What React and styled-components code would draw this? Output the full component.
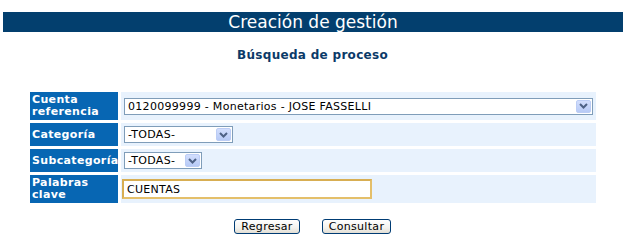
import React, { useState } from 'react';
import styled, { createGlobalStyle } from 'styled-components';

const GlobalStyle = createGlobalStyle`
    body {
        margin: 0;
        background: #ffffff;
        font-family: "DejaVu Sans", Verdana, sans-serif;
    }
`;

// 페이지 전체
const Page = styled.div`
    width: 625px;
    padding-top: 12px;
    box-sizing: border-box;
`;

// 상단 제목 바
const TitleBar = styled.div`
    margin: 0 2px 0 3px;
    height: 20px;
    background: #033f6e;
    color: #ffffff;
    font-size: 17px;
    line-height: 20px;
    text-align: center;
`;

// 부제목
const Subtitle = styled.div`
    margin-top: 16px;
    color: #0b3a68;
    font-size: 12px;
    font-weight: bold;
    line-height: 14px;
    letter-spacing: 0.3px;
    text-align: center;
`;

// 폼 그리드
const FormGrid = styled.div`
    display: grid;
    grid-template-columns: 88px 475px;
    grid-auto-rows: auto;
    gap: 3px;
    margin: 30px 0 0 30px;
`;

// 라벨 셀
const LabelCell = styled.div`
    height: ${(p) => p.$h}px;
    display: flex;
    align-items: center;
    padding: 0 1px 0 2px;
    box-sizing: border-box;
    background: #0766b3;
    color: #ffffff;
    font-size: 11px;
    font-weight: bold;
    line-height: 12px;
    letter-spacing: 0.35px;
    white-space: nowrap;
    overflow: hidden;
`;

// 값 셀
const ValueCell = styled.div`
    height: ${(p) => p.$h}px;
    display: flex;
    align-items: center;
    padding-left: ${(p) => p.$pad ?? 3}px;
    box-sizing: border-box;
    background: #e8f2fd;
`;

// 콤보박스
const Combo = styled.div`
    width: ${(p) => p.$w}px;
    height: 17px;
    display: flex;
    align-items: center;
    gap: 2px;
    padding: 1px;
    box-sizing: border-box;
    border: 1px solid #7f9db9;
    background: #ffffff;
`;

const ComboSelect = styled.select`
    flex: 1;
    min-width: 0;
    height: 15px;
    padding: 0 0 0 2px;
    border: none;
    outline: none;
    background: transparent;
    appearance: none;
    -webkit-appearance: none;
    font-family: "DejaVu Sans", Verdana, sans-serif;
    font-size: 11px;
    line-height: 15px;
    letter-spacing: 0.3px;
    color: #000000;
`;

// 콤보 화살표 버튼
const ArrowButton = styled.span`
    width: 15px;
    height: 13px;
    flex-shrink: 0;
    display: flex;
    align-items: center;
    justify-content: center;
    border: 1px solid #bccdf5;
    border-radius: 2px;
    box-sizing: border-box;
    background: linear-gradient(#d2defd, #b7caf6);
`;

// 텍스트 입력
const TextInput = styled.input`
    width: 250px;
    height: 20px;
    padding: 0 3px;
    box-sizing: border-box;
    border: 2px solid #e4bf6a;
    border-top-color: #d8ae52;
    border-left-color: #d8ae52;
    outline: none;
    font-family: "DejaVu Sans", Verdana, sans-serif;
    font-size: 11px;
    letter-spacing: 0.3px;
    color: #000000;
`;

// 버튼 줄
const ButtonRow = styled.div`
    display: flex;
    justify-content: center;
    gap: 22px;
    margin-top: 16px;
`;

const XPButton = styled.button`
    width: ${(p) => p.$w}px;
    height: 15px;
    padding: 0;
    border: 1px solid #003c74;
    border-radius: 3px;
    background: linear-gradient(#ffffff, #f3f2ee 60%, #e2ded4);
    font-family: "DejaVu Sans", Verdana, sans-serif;
    font-size: 11px;
    line-height: 12px;
    letter-spacing: 0.3px;
    color: #000000;
    cursor: pointer;
`;

const Chevron = () => (
    <svg width="9" height="6" viewBox="0 0 9 6">
        <path d="M1 1 L4.5 4.5 L8 1" fill="none" stroke="#4d6185" strokeWidth="2" />
    </svg>
);

function ComboBox({ width, value, options }) {
    return (
        <Combo $w={width}>
            <ComboSelect defaultValue={value}>
                {options.map((o) => (
                    <option key={o}>{o}</option>
                ))}
            </ComboSelect>
            <ArrowButton>
                <Chevron />
            </ArrowButton>
        </Combo>
    );
}

export default function App() {
    const [keywords, setKeywords] = useState('CUENTAS');

    return (
        <Page>
            <GlobalStyle />
            <TitleBar>Creación de gestión</TitleBar>
            <Subtitle>Búsqueda de proceso</Subtitle>

            <FormGrid>
                <LabelCell $h={28}>Cuenta<br />referencia</LabelCell>
                <ValueCell $h={28}>
                    <ComboBox
                        width={469}
                        value="0120099999 - Monetarios - JOSE FASSELLI"
                        options={['0120099999 - Monetarios - JOSE FASSELLI']}
                    />
                </ValueCell>

                <LabelCell $h={23}>Categoría</LabelCell>
                <ValueCell $h={23}>
                    <ComboBox width={109} value="-TODAS-" options={['-TODAS-']} />
                </ValueCell>

                <LabelCell $h={23}>Subcategoría</LabelCell>
                <ValueCell $h={23}>
                    <ComboBox width={78} value="-TODAS-" options={['-TODAS-']} />
                </ValueCell>

                <LabelCell $h={28}>Palabras<br />clave</LabelCell>
                <ValueCell $h={28} $pad={1}>
                    <TextInput
                        type="text"
                        value={keywords}
                        onChange={(e) => setKeywords(e.target.value)}
                    />
                </ValueCell>
            </FormGrid>

            <ButtonRow>
                <XPButton $w={66}>Regresar</XPButton>
                <XPButton $w={69}>Consultar</XPButton>
            </ButtonRow>
        </Page>
    );
}
